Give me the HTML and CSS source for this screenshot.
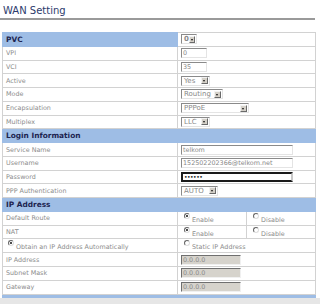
FILE: index.html
```html
<html>
  <head>
    <link rel="stylesheet" href="styles.css">
    <title>WAN Setting</title>
  </head>
  <body>
    <div class="page">
      <h1 class="title">WAN Setting</h1>
      <table class="form">
        <colgroup>
          <col class="c-label">
          <col class="c-a">
          <col class="c-b">
        </colgroup>
        <tr class="head">
          <td>PVC</td>
          <td colspan="2" class="white"><span class="sel w-pvc"><span class="val">0</span><span class="arrow"></span></span></td>
        </tr>
        <tr><td>VPI</td><td colspan="2"><span class="txt w-num">0</span></td></tr>
        <tr><td>VCI</td><td colspan="2"><span class="txt w-num">35</span></td></tr>
        <tr><td>Active</td><td colspan="2"><span class="sel w-yes"><span class="val">Yes</span><span class="arrow"></span></span></td></tr>
        <tr><td>Mode</td><td colspan="2"><span class="sel w-mode"><span class="val">Routing</span><span class="arrow"></span></span></td></tr>
        <tr><td>Encapsulation</td><td colspan="2"><span class="sel w-encap"><span class="val">PPPoE</span><span class="arrow"></span></span></td></tr>
        <tr><td>Multiplex</td><td colspan="2"><span class="sel w-yes"><span class="val">LLC</span><span class="arrow"></span></span></td></tr>
        <tr class="head"><td colspan="3">Login Information</td></tr>
        <tr><td>Service Name</td><td colspan="2"><span class="txt w-long">telkom</span></td></tr>
        <tr><td>Username</td><td colspan="2"><span class="txt w-long">152502202366@telkom.net</span></td></tr>
        <tr><td>Password</td><td colspan="2"><span class="txt w-long pass">&#8226;&#8226;&#8226;&#8226;&#8226;&#8226;</span></td></tr>
        <tr><td>PPP Authentication</td><td colspan="2"><span class="sel w-auto"><span class="val">AUTO</span><span class="arrow"></span></span></td></tr>
        <tr class="head"><td colspan="3">IP Address</td></tr>
        <tr>
          <td>Default Route</td>
          <td><span class="radio on"></span><span class="opt">Enable</span></td>
          <td><span class="radio"></span><span class="opt">Disable</span></td>
        </tr>
        <tr>
          <td>NAT</td>
          <td><span class="radio on"></span><span class="opt">Enable</span></td>
          <td><span class="radio"></span><span class="opt">Disable</span></td>
        </tr>
        <tr>
          <td class="indent"><span class="radio on"></span><span class="opt">Obtain an IP Address Automatically</span></td>
          <td colspan="2"><span class="radio"></span><span class="opt">Static IP Address</span></td>
        </tr>
        <tr><td>IP Address</td><td colspan="2"><span class="txt w-ip off">0.0.0.0</span></td></tr>
        <tr><td>Subnet Mask</td><td colspan="2"><span class="txt w-ip off">0.0.0.0</span></td></tr>
        <tr><td>Gateway</td><td colspan="2"><span class="txt w-ip off">0.0.0.0</span></td></tr>
        <tr class="foot"><td colspan="3"></td></tr>
      </table>
      <div class="bottom"></div>
    </div>
  </body>
</html>
```

FILE: styles.css
```css
body {
  margin: 0;
  background-color: #fff;
  font-family: "DejaVu Sans", Verdana, sans-serif;
  color: #8c8c8c;
}
.page {
  width: 320px;
}
.title {
  margin: 0 5px 0 0;
  padding: 5px 0 2px 3px;
  height: 11px;
  font-size: 10px;
  font-weight: normal;
  line-height: 11px;
  color: #2c3a6c;
  border-bottom: 2px solid #9a9a9a;
}
.form {
  margin: 12px 0 0 2px;
  width: 314px;
  border-collapse: collapse;
  table-layout: fixed;
  font-size: 6.4px;
}
.c-label {
  width: 175px;
}
.c-a,
.c-b {
  width: 69px;
}
.form tr {
  height: 13.78px;
}
.form td {
  padding: 0 0 0 3px;
  border: 1px solid #d2d2d2;
  white-space: nowrap;
  overflow: hidden;
  vertical-align: middle;
}
.form tr.head td {
  background-color: #9ebde5;
  color: #1d2450;
  font-weight: bold;
  font-size: 7.4px;
  border-color: #9ebde5;
}
.form tr.head td.white {
  background-color: #fff;
  border-color: #d2d2d2;
}
.form tr.foot {
  height: 3px;
}
.form tr.foot td {
  background-color: #9ebde5;
  border-color: #9ebde5;
}
.bottom {
  height: 7px;
  background-color: #e6e6e6;
}

.txt,
.sel {
  display: inline-block;
  box-sizing: border-box;
  height: 10px;
  line-height: 8px;
  font-size: 6.4px;
  color: #888;
  vertical-align: middle;
  background-color: #fff;
}
.txt {
  padding-left: 1px;
  border: 1px solid;
  border-color: #8a8a8a #e4e4e4 #e4e4e4 #8a8a8a;
}
.txt.pass {
  border: 2px solid #1a1a1a;
  border-right-color: #c8c8c8;
  line-height: 6px;
  color: #111;
  font-size: 6px;
  letter-spacing: -0.5px;
}
.txt.off {
  background-color: #d6d3cc;
  border-color: #6f6f6f #f0f0f0 #f0f0f0 #6f6f6f;
}
.sel {
  display: inline-flex;
  align-items: center;
  justify-content: space-between;
  padding: 0 1px 0 2px;
  border: 1px solid;
  border-color: #8a8a8a #e4e4e4 #e4e4e4 #8a8a8a;
  font-size: 7px;
}
.arrow {
  position: relative;
  width: 7px;
  height: 7px;
  background-color: #d4d0c8;
  border: 1px solid;
  border-color: #f2f2f2 #6a6a6a #6a6a6a #f2f2f2;
  box-sizing: border-box;
}
.arrow::after {
  content: "";
  position: absolute;
  left: 1px;
  top: 2px;
  border-left: 1.5px solid transparent;
  border-right: 1.5px solid transparent;
  border-top: 2px solid #111;
}
.w-pvc { width: 16px; }
.w-num { width: 26px; }
.w-yes { width: 29px; }
.w-mode { width: 42px; }
.w-encap { width: 68px; }
.w-auto { width: 37px; }
.w-long { width: 112px; }
.w-ip { width: 60px; }

.radio {
  display: inline-block;
  box-sizing: border-box;
  width: 6px;
  height: 6px;
  margin: 0 2px 0 3px;
  border: 1px solid #777;
  border-color: #666 #ddd #ddd #666;
  border-radius: 50%;
  background-color: #fff;
  vertical-align: 2px;
  position: relative;
}
.radio.on::after {
  content: "";
  position: absolute;
  left: 1px;
  top: 1px;
  width: 2px;
  height: 2px;
  border-radius: 50%;
  background-color: #111;
}
.opt {
  font-size: 6.4px;
  vertical-align: -1px;
}
.form td.indent {
  padding-left: 2px;
}
```
